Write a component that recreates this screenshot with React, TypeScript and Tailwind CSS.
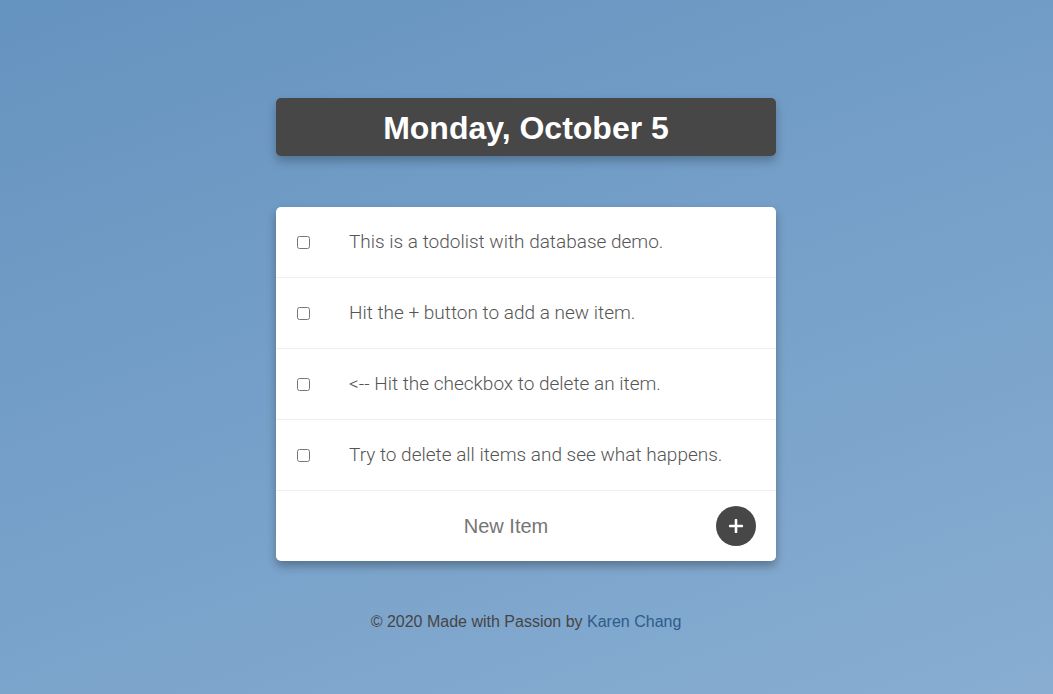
const items = [
  'This is a todolist with database demo.',
  'Hit the + button to add a new item.',
  '<-- Hit the checkbox to delete an item.',
  'Try to delete all items and see what happens.',
]

export default function App() {
  return (
    <div
      className="min-h-[694px] w-full bg-[linear-gradient(160deg,#6593bf_0%,#7aa3cb_60%,#88add1_100%)] pr-px pt-[98px]"
      style={{ fontFamily: '"Liberation Sans", Arial, sans-serif' }}
    >
      <div className="mx-auto w-[500px]">
        <div className="flex h-[58px] items-center justify-center rounded-[5px] bg-[#474747] pt-px shadow-[0_5px_10px_rgba(0,0,0,0.25)]">
          <h1 className="text-[32px] font-bold text-white">Monday, October 5</h1>
        </div>

        <div className="mt-[51px] overflow-hidden rounded-[5px] bg-white shadow-[0_5px_10px_rgba(0,0,0,0.3)]">
          {items.map((text) => (
            <div key={text} className="flex h-[71px] items-center border-b border-[#eeeeee]">
              <input type="checkbox" className="ml-[21px] h-[13px] w-[13px]" />
              <p
                className="ml-[39px] text-[19px] font-light text-[#555555]"
                style={{ fontFamily: 'Roboto, "Liberation Sans", sans-serif' }}
              >
                {text}
              </p>
            </div>
          ))}
          <div className="flex h-[70px] items-center">
            <span className="flex-1 pl-[20px] text-center text-[20px] text-[#757575]">New Item</span>
            <button className="mr-[20px] flex h-[40px] w-[40px] shrink-0 items-center justify-center rounded-full bg-[#474747]">
              <svg width="14" height="14" viewBox="0 0 14 14">
                <path d="M7 1v12M1 7h12" stroke="white" strokeWidth="2.6" strokeLinecap="round" />
              </svg>
            </button>
          </div>
        </div>

        <p className="mt-[49px] text-center text-[16px] text-[#454545]">
          © 2020 Made with Passion by <a className="text-[#2f5b8a]">Karen Chang</a>
        </p>
      </div>
    </div>
  )
}
